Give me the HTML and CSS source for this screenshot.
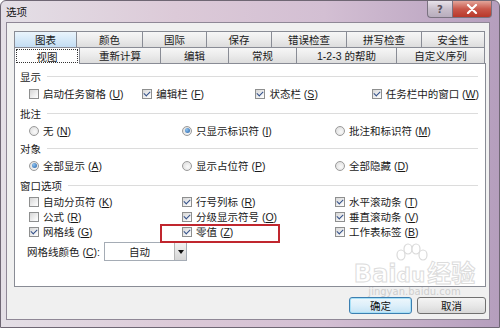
FILE: index.html
```html
<!DOCTYPE html>
<html lang="zh-CN">
<head>
  <meta charset="UTF-8">
  <title>选项</title>
  <link rel="stylesheet" href="styles.css">
</head>
<body>
  <div class="window">
    <div class="titlebar">
      <span class="title">选项</span>
      <div class="caption">
        <span class="cap-btn help">?</span>
        <span class="cap-btn close">
          <svg width="12" height="10" viewBox="0 0 12 10"><path d="M2 1 L10 9 M10 1 L2 9" stroke="#fff" stroke-width="2.2" stroke-linecap="round"/></svg>
        </span>
      </div>
    </div>

    <div class="client">
      <div class="tabs">
        <div class="tab-row">
          <span class="tab hot" style="width:63px">图表</span>
          <span class="tab" style="width:66px">颜色</span>
          <span class="tab" style="width:64px">国际</span>
          <span class="tab" style="width:65px">保存</span>
          <span class="tab" style="width:75px">错误检查</span>
          <span class="tab" style="width:75px">拼写检查</span>
          <span class="tab" style="width:63px">安全性</span>
        </div>
        <div class="tab-row">
          <span class="tab selected" style="width:66px"><span class="focus">视图</span></span>
          <span class="tab" style="width:81px">重新计算</span>
          <span class="tab" style="width:68px">编辑</span>
          <span class="tab" style="width:68px">常规</span>
          <span class="tab" style="width:100px">1-2-3 的帮助</span>
          <span class="tab" style="width:88px">自定义序列</span>
        </div>
      </div>

      <div class="panel">
        <div class="group">显示</div>
        <div class="row">
          <label class="item w114"><span class="cb"></span><span>启动任务窗格 (<u>U</u>)</span></label>
          <label class="item w114"><span class="cb on"></span><span>编辑栏 (<u>F</u>)</span></label>
          <label class="item w117"><span class="cb on"></span><span>状态栏 (<u>S</u>)</span></label>
          <label class="item"><span class="cb on"></span><span>任务栏中的窗口 (<u>W</u>)</span></label>
        </div>

        <div class="group gap3">批注</div>
        <div class="row">
          <label class="item w153"><span class="rb"></span><span>无 (<u>N</u>)</span></label>
          <label class="item w153"><span class="rb on"></span><span>只显示标识符 (<u>I</u>)</span></label>
          <label class="item"><span class="rb"></span><span>批注和标识符 (<u>M</u>)</span></label>
        </div>

        <div class="group gap1">对象</div>
        <div class="row">
          <label class="item w153"><span class="rb on"></span><span>全部显示 (<u>A</u>)</span></label>
          <label class="item w153"><span class="rb"></span><span>显示占位符 (<u>P</u>)</span></label>
          <label class="item"><span class="rb"></span><span>全部隐藏 (<u>D</u>)</span></label>
        </div>

        <div class="group gap3">窗口选项</div>
        <div class="row small">
          <label class="item w153"><span class="cb"></span><span>自动分页符 (<u>K</u>)</span></label>
          <label class="item w153"><span class="cb on"></span><span>行号列标 (<u>R</u>)</span></label>
          <label class="item"><span class="cb on"></span><span>水平滚动条 (<u>T</u>)</span></label>
        </div>
        <div class="row small">
          <label class="item w153"><span class="cb"></span><span>公式 (<u>R</u>)</span></label>
          <label class="item w153"><span class="cb on"></span><span>分级显示符号 (<u>O</u>)</span></label>
          <label class="item"><span class="cb on"></span><span>垂直滚动条 (<u>V</u>)</span></label>
        </div>
        <div class="row small">
          <label class="item w153"><span class="cb on"></span><span>网格线 (<u>G</u>)</span></label>
          <label class="item w153"><span class="cb on"></span><span>零值 (<u>Z</u>)</span></label>
          <label class="item"><span class="cb on"></span><span>工作表标签 (<u>B</u>)</span></label>
        </div>

        <div class="color-row">
          <span class="color-label">网格线颜色 (<u>C</u>):</span>
          <div class="combo">
            <span class="combo-text">自动</span>
            <span class="combo-btn"></span>
          </div>
        </div>
      </div>

      <div class="buttons">
        <button class="btn default">确定</button>
        <button class="btn cancel">取消</button>
      </div>

      <div class="highlight"></div>

      <div class="watermark">
        <svg class="paw" width="34" height="22" viewBox="0 0 34 22">
          <g fill="#fff" stroke="#dadada" stroke-width="1.2">
            <ellipse cx="6" cy="12" rx="4" ry="5"/>
            <ellipse cx="13" cy="6" rx="4" ry="5"/>
            <ellipse cx="21" cy="6" rx="4" ry="5"/>
            <ellipse cx="28" cy="12" rx="4" ry="5"/>
          </g>
        </svg>
        <div class="wm-big">Bai<span class="du">du</span>经验</div>
        <div class="wm-url">jingyan.baidu.com</div>
      </div>
    </div>
  </div>
</body>
</html>
```

FILE: styles.css
```css
* {
  box-sizing: border-box;
}
body {
  margin: 0;
  width: 500px;
  height: 328px;
  overflow: hidden;
  font-family: "Liberation Sans", "Noto Sans CJK SC", sans-serif;
  font-size: 10.5px;
  color: #1a1a1a;
  background: #fff;
}
u {
  text-decoration: underline;
}
.window {
  width: 500px;
  height: 328px;
  padding-bottom: 8px;
  border-radius: 6px 6px 0 0;
  border: 1px solid #6f6774;
  background: linear-gradient(to right, #e4dfe6 0%, #dccad8 35%, #d3bfd3 65%, #b59ebd 100%);
}
.titlebar {
  height: 21px;
  display: flex;
  align-items: flex-start;
  padding: 0 7px 0 5px;
}
.title {
  line-height: 22px;
  color: #111;
}
.caption {
  margin-left: auto;
  display: flex;
}
.cap-btn {
  height: 17px;
  display: flex;
  align-items: center;
  justify-content: center;
  border: 1px solid #7a7280;
  border-top: none;
}
.help {
  width: 25px;
  border-radius: 0 0 0 4px;
  border-right: none;
  background: linear-gradient(#e8e2ea, #c9bfcc 50%, #b8adbd);
  color: #5a5260;
  font-family: "DejaVu Sans", sans-serif;
  font-size: 10px;
  font-weight: bold;
}
.close {
  width: 40px;
  border-radius: 0 0 4px 0;
  background: linear-gradient(#e3a59a, #c9574a 50%, #b8382a);
}
.client {
  position: relative;
  margin-left: 5px;
  width: 484px;
  height: 298px;
  border: 1px solid #8f8796;
  background: #f0f0f0;
  padding: 8px 3px 0 7px;
}
.tab-row {
  display: flex;
  height: 16px;
}
.tab {
  display: flex;
  align-items: center;
  justify-content: center;
  border: 1px solid #898c95;
  border-left: none;
  border-bottom: none;
  background: linear-gradient(#f6f6f6, #ebebeb 50%, #dddddd);
  white-space: nowrap;
}
.tab:first-child {
  border-left: 1px solid #898c95;
}
.tab.hot {
  background: linear-gradient(#eaf4fc, #d6e9f8 50%, #c3ddf3);
}
.tab.selected {
  background: #fff;
  position: relative;
  z-index: 1;
  height: 17px;
  padding: 1px;
}
.focus {
  width: 100%;
  height: 100%;
  display: flex;
  align-items: center;
  justify-content: center;
  border: 1px dotted #333;
}
.panel {
  width: 472px;
  height: 224px;
  background: #fff;
  border: 1px solid #898c95;
  padding: 4px 6px 0 5px;
}
.group {
  height: 17px;
  display: flex;
  align-items: center;
  gap: 6px;
  padding-right: 1px;
}
.group::after {
  content: "";
  flex: 1;
  border-top: 1px solid #dcdcdc;
}
.gap3 {
  margin-top: 3px;
}
.gap1 {
  margin-top: 1px;
}
.row {
  height: 17px;
  display: flex;
  align-items: center;
  padding-left: 9px;
}
.row.small {
  height: 15px;
}
.item {
  display: flex;
  align-items: center;
  gap: 4px;
  white-space: pre;
}
.w114 { width: 114px; }
.w117 { width: 117px; }
.w153 { width: 153px; }
.cb {
  width: 10px;
  height: 10px;
  border: 1px solid #8e8f8f;
  background: linear-gradient(135deg, #d6d6d6, #f4f4f4 70%, #fff);
  display: flex;
  align-items: center;
  justify-content: center;
}
.cb.on::after {
  content: "";
  width: 5px;
  height: 3px;
  margin-top: -2px;
  border-left: 1.5px solid #33508a;
  border-bottom: 1.5px solid #33508a;
  transform: rotate(-45deg);
}
.rb {
  width: 10px;
  height: 10px;
  border-radius: 50%;
  border: 1px solid #9a9a9a;
  background: radial-gradient(circle at 60% 60%, #fafafa, #d8d8d8);
  display: flex;
  align-items: center;
  justify-content: center;
}
.rb.on::after {
  content: "";
  width: 5px;
  height: 5px;
  border-radius: 50%;
  background: radial-gradient(circle at 35% 35%, #8ec4f0, #245ea6);
}
.color-row {
  margin-top: 3px;
  display: flex;
  align-items: center;
  padding-left: 7px;
  height: 19px;
}
.color-label {
  width: 77px;
  white-space: pre;
}
.combo {
  width: 83px;
  height: 19px;
  border: 1px solid #a5acb5;
  display: flex;
  background: #fff;
}
.combo-text {
  flex: 1;
  display: flex;
  align-items: center;
  justify-content: center;
}
.combo-btn {
  width: 12px;
  border-left: 1px solid #b5b5b5;
  background: linear-gradient(#f2f2f2, #d6d6d6);
  display: flex;
  align-items: center;
  justify-content: center;
}
.combo-btn::after {
  content: "";
  border-left: 3.5px solid transparent;
  border-right: 3.5px solid transparent;
  border-top: 4px solid #111;
}
.buttons {
  margin-top: 10px;
  width: 472px;
  display: flex;
  justify-content: flex-end;
  gap: 5px;
}
.btn {
  height: 17px;
  padding: 0;
  font-family: inherit;
  font-size: 10.5px;
  color: #111;
  border: 1px solid #707070;
  border-radius: 3px;
  background: linear-gradient(#f4f4f4, #e8e8e8 50%, #d8d8d8);
}
.btn.default {
  width: 63px;
  border-color: #3c7fb1;
  box-shadow: inset 0 0 0 1px #a7e0f7;
  background: linear-gradient(#eef7fc, #ddeffa 50%, #c4e3f5);
}
.btn.cancel {
  width: 69px;
}
.highlight {
  position: absolute;
  left: 153px;
  top: 201px;
  width: 120px;
  height: 19px;
  border: 2px solid #c0262e;
}
.watermark {
  position: absolute;
  left: 345px;
  top: 220px;
  width: 125px;
  pointer-events: none;
  display: flex;
  flex-direction: column;
  align-items: center;
}
.paw {
  margin-left: -6px;
}
.wm-big {
  margin-top: -4px;
  font-family: "DejaVu Sans", "Noto Sans CJK SC", sans-serif;
  font-weight: bold;
  font-size: 24px;
  line-height: 26px;
  color: rgba(255, 255, 255, 0.6);
  -webkit-text-stroke: 1px #dcdcdc;
  white-space: nowrap;
}
.wm-big .du {
  font-size: 20px;
  margin-right: 2px;
}
.wm-url {
  margin-top: -2px;
  font-family: "DejaVu Sans", sans-serif;
  font-size: 10px;
  line-height: 11px;
  color: rgba(190, 190, 190, 0.7);
}
```
